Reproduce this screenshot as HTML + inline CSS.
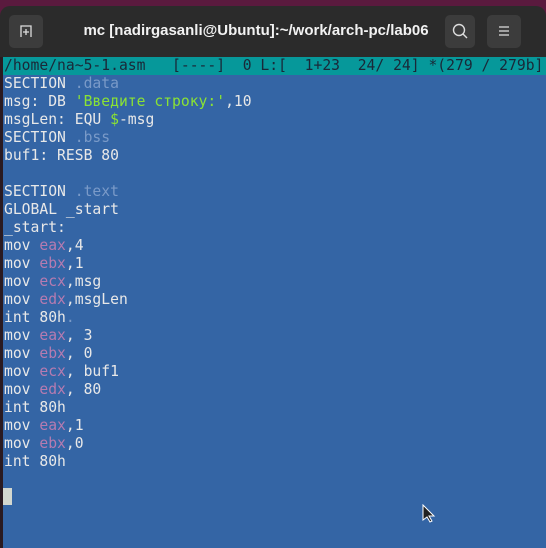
<!DOCTYPE html><html style="overflow:hidden;height:548px"><head><style>
body{margin:0;width:546px;height:548px;background:#5a1a3e;position:relative;overflow:hidden;font-family:"DejaVu Sans Mono",monospace}
.win{position:absolute;left:0;top:6px;width:546px;height:542px;background:#2b2b2b;border-radius:10px 10px 0 0}
.btn{position:absolute;top:15px;height:33px;background:#3c3c3c;border-radius:5px}
.title{position:absolute;top:22px;left:71px;width:370px;text-align:center;color:#f2f2f2;font:bold 15px "Liberation Sans",sans-serif;white-space:nowrap}
.term{position:absolute;left:3px;top:57px;width:543px;height:491px;background:#3465a5}
.edge{position:absolute;left:0;top:57px;width:3px;height:491px;background:#2a1a20}
.hdr{position:absolute;left:3px;top:57px;width:543px;height:18px;background:#06989a}
pre{margin:0;position:absolute;left:4px;font-size:14.7px;line-height:18px;color:#e8e8e8;font-family:"DejaVu Sans Mono",monospace;white-space:pre}
.k{color:#7a9ac8}.g{color:#8ae234}.r{color:#b67bb0}
.cur{position:absolute;left:3px;top:488px;width:9px;height:17px;background:#d3d7cf}
</style></head><body>
<div class="win"></div>
<div class="btn" style="left:9px;width:34px"></div>
<svg style="position:absolute;left:18px;top:23px" width="16" height="16"><path d="M3 14V3h10v11" fill="none" stroke="#ddd" stroke-width="1.3"/><path d="M8 6v6M5 9h6" stroke="#ddd" stroke-width="1.3"/></svg>
<div class="title">mc [nadirgasanli@Ubuntu]:~/work/arch-pc/lab06</div>
<div class="btn" style="left:445px;width:30px"></div>
<svg style="position:absolute;left:451px;top:22px" width="18" height="18"><circle cx="8" cy="8" r="5.5" fill="none" stroke="#ddd" stroke-width="1.4"/><path d="M12 12l4 4" stroke="#ddd" stroke-width="1.4"/></svg>
<div class="btn" style="left:487px;width:34px"></div>
<svg style="position:absolute;left:496px;top:24px" width="16" height="14"><path d="M3 3h10M3 7h10M3 11h10" stroke="#ddd" stroke-width="1.3"/></svg>
<div class="term"></div><div class="edge"></div>
<div class="hdr"></div>
<pre style="top:57px;color:#1a2838">/home/na~5-1.asm   [----]  0 L:[  1+23  24/ 24] *(279 / 279b]</pre>
<pre style="top:75px">SECTION <span class="k">.data</span>
msg: DB <span class="g">'Введите строку:'</span>,10
msgLen: EQU <span class="g">$</span>-msg
SECTION <span class="k">.bss</span>
buf1: RESB 80

SECTION <span class="k">.text</span>
GLOBAL _start
_start:
mov <span class="r">eax</span>,4
mov <span class="r">ebx</span>,1
mov <span class="r">ecx</span>,msg
mov <span class="r">edx</span>,msgLen
int 80h<span class="k">.</span>
mov <span class="r">eax</span>, 3
mov <span class="r">ebx</span>, 0
mov <span class="r">ecx</span>, buf1
mov <span class="r">edx</span>, 80
int 80h
mov <span class="r">eax</span>,1
mov <span class="r">ebx</span>,0
int 80h</pre>
<div class="cur"></div>
<svg style="position:absolute;left:422px;top:504px" width="14" height="20"><path d="M1 1v15l4-3 3 5 2-1-3-5h5z" fill="#222" stroke="#fff" stroke-width="1"/></svg>
</body></html>
